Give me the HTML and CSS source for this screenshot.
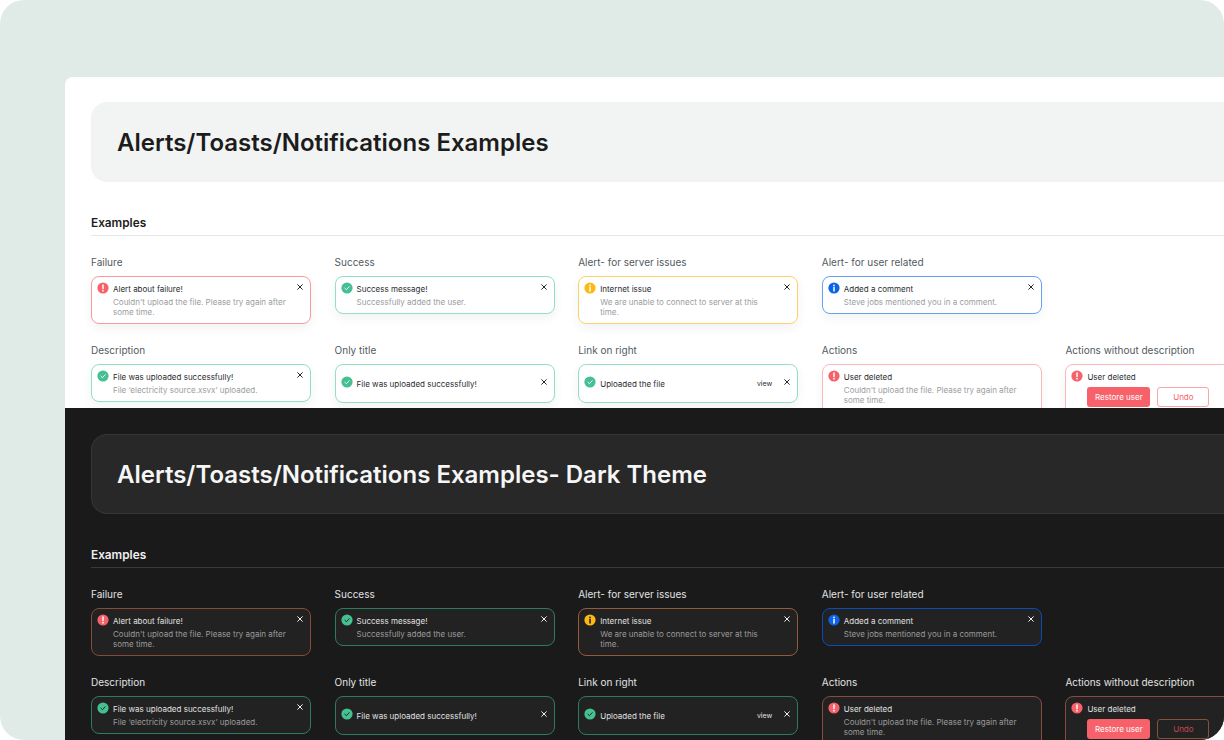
FILE: index.html
```html
<!DOCTYPE html>
<html lang="en">
<head>
<meta charset="utf-8">
<title>Alerts/Toasts/Notifications Examples</title>
<link rel="stylesheet" href="styles.css">
</head>
<body>
<svg class="defs" width="0" height="0" aria-hidden="true">
  <defs>
    <symbol id="i-fail" viewBox="0 0 12 12"><circle cx="6" cy="6" r="5.6" fill="#f7616a"/><path d="M6 2.9v3.6" stroke="#fff" stroke-width="1.5" stroke-linecap="round"/><circle cx="6" cy="8.7" r=".85" fill="#fff"/></symbol>
    <symbol id="i-ok" viewBox="0 0 12 12"><circle cx="6" cy="6" r="5.6" fill="#45c093"/><path d="M3.9 6.2l1.5 1.5 2.8-3" fill="none" stroke="currentColor" stroke-width=".9" stroke-linecap="round" stroke-linejoin="round"/></symbol>
    <symbol id="i-warn" viewBox="0 0 12 12"><circle cx="6" cy="6" r="5.6" fill="#fdb913"/><circle cx="6" cy="3.4" r=".85" fill="currentColor"/><path d="M6 5.4v3.6" stroke="currentColor" stroke-width="1.5" stroke-linecap="round"/></symbol>
    <symbol id="i-info" viewBox="0 0 12 12"><circle cx="6" cy="6" r="5.6" fill="#0a63e8"/><circle cx="6" cy="3.4" r=".85" fill="#fff"/><path d="M6 5.4v3.6" stroke="#fff" stroke-width="1.5" stroke-linecap="round"/></symbol>
    <symbol id="i-x" viewBox="0 0 8 8"><path d="M1.4 1.4l5.2 5.2M6.6 1.4L1.4 6.6" fill="none" stroke="currentColor" stroke-width="1"/></symbol>
  </defs>
</svg>
<main class="stage">
  <section class="panel panel-light">
    <header class="banner"><h1>Alerts/Toasts/Notifications Examples</h1></header>
    <h2 class="section-title">Examples</h2>
    <div class="grid">
      <div class="cell"><p class="label">Failure</p>
        <div class="toast fail"><svg class="icon"><use href="#i-fail"/></svg><div class="body"><p class="title">Alert about failure!</p><p class="desc">Couldn't upload the file. Please try again after some time.</p></div><svg class="close"><use href="#i-x"/></svg></div></div>
      <div class="cell"><p class="label">Success</p>
        <div class="toast ok"><svg class="icon"><use href="#i-ok"/></svg><div class="body"><p class="title">Success message!</p><p class="desc">Successfully added the user.</p></div><svg class="close"><use href="#i-x"/></svg></div></div>
      <div class="cell"><p class="label">Alert- for server issues</p>
        <div class="toast warn"><svg class="icon"><use href="#i-warn"/></svg><div class="body"><p class="title">Internet issue</p><p class="desc">We are unable to connect to server at this time.</p></div><svg class="close"><use href="#i-x"/></svg></div></div>
      <div class="cell"><p class="label">Alert- for user related</p>
        <div class="toast info"><svg class="icon"><use href="#i-info"/></svg><div class="body"><p class="title">Added a comment</p><p class="desc">Steve jobs mentioned you in a comment.</p></div><svg class="close"><use href="#i-x"/></svg></div></div>
      <div class="cell"></div>
      <div class="cell"><p class="label">Description</p>
        <div class="toast ok"><svg class="icon"><use href="#i-ok"/></svg><div class="body"><p class="title">File was uploaded successfully!</p><p class="desc">File ‘electricity source.xsvx’ uploaded.</p></div><svg class="close"><use href="#i-x"/></svg></div></div>
      <div class="cell"><p class="label">Only title</p>
        <div class="toast ok single"><svg class="icon"><use href="#i-ok"/></svg><div class="body"><p class="title">File was uploaded successfully!</p></div><svg class="close"><use href="#i-x"/></svg></div></div>
      <div class="cell"><p class="label">Link on right</p>
        <div class="toast ok single"><svg class="icon"><use href="#i-ok"/></svg><div class="body"><p class="title">Uploaded the file</p></div><span class="link">view</span><svg class="close"><use href="#i-x"/></svg></div></div>
      <div class="cell"><p class="label">Actions</p>
        <div class="toast action"><svg class="icon"><use href="#i-fail"/></svg><div class="body"><p class="title">User deleted</p><p class="desc">Couldn't upload the file. Please try again after some time.</p></div></div></div>
      <div class="cell"><p class="label">Actions without description</p>
        <div class="toast action"><svg class="icon"><use href="#i-fail"/></svg><div class="body"><p class="title">User deleted</p><div class="buttons"><span class="btn solid">Restore user</span><span class="btn ghost">Undo</span></div></div></div></div>
    </div>
  </section>
  <section class="panel panel-dark">
    <header class="banner"><h1>Alerts/Toasts/Notifications Examples- Dark Theme</h1></header>
    <h2 class="section-title">Examples</h2>
    <div class="grid">
      <div class="cell"><p class="label">Failure</p>
        <div class="toast fail"><svg class="icon"><use href="#i-fail"/></svg><div class="body"><p class="title">Alert about failure!</p><p class="desc">Couldn't upload the file. Please try again after some time.</p></div><svg class="close"><use href="#i-x"/></svg></div></div>
      <div class="cell"><p class="label">Success</p>
        <div class="toast ok"><svg class="icon"><use href="#i-ok"/></svg><div class="body"><p class="title">Success message!</p><p class="desc">Successfully added the user.</p></div><svg class="close"><use href="#i-x"/></svg></div></div>
      <div class="cell"><p class="label">Alert- for server issues</p>
        <div class="toast warn"><svg class="icon"><use href="#i-warn"/></svg><div class="body"><p class="title">Internet issue</p><p class="desc">We are unable to connect to server at this time.</p></div><svg class="close"><use href="#i-x"/></svg></div></div>
      <div class="cell"><p class="label">Alert- for user related</p>
        <div class="toast info"><svg class="icon"><use href="#i-info"/></svg><div class="body"><p class="title">Added a comment</p><p class="desc">Steve jobs mentioned you in a comment.</p></div><svg class="close"><use href="#i-x"/></svg></div></div>
      <div class="cell"></div>
      <div class="cell"><p class="label">Description</p>
        <div class="toast ok"><svg class="icon"><use href="#i-ok"/></svg><div class="body"><p class="title">File was uploaded successfully!</p><p class="desc">File ‘electricity source.xsvx’ uploaded.</p></div><svg class="close"><use href="#i-x"/></svg></div></div>
      <div class="cell"><p class="label">Only title</p>
        <div class="toast ok single"><svg class="icon"><use href="#i-ok"/></svg><div class="body"><p class="title">File was uploaded successfully!</p></div><svg class="close"><use href="#i-x"/></svg></div></div>
      <div class="cell"><p class="label">Link on right</p>
        <div class="toast ok single"><svg class="icon"><use href="#i-ok"/></svg><div class="body"><p class="title">Uploaded the file</p></div><span class="link">view</span><svg class="close"><use href="#i-x"/></svg></div></div>
      <div class="cell"><p class="label">Actions</p>
        <div class="toast action"><svg class="icon"><use href="#i-fail"/></svg><div class="body"><p class="title">User deleted</p><p class="desc">Couldn't upload the file. Please try again after some time.</p></div></div></div>
      <div class="cell"><p class="label">Actions without description</p>
        <div class="toast action"><svg class="icon"><use href="#i-fail"/></svg><div class="body"><p class="title">User deleted</p><div class="buttons"><span class="btn solid">Restore user</span><span class="btn ghost">Undo</span></div></div></div></div>
    </div>
  </section>
</main>
</body>
</html>
```
FILE: styles.css
```css
* { box-sizing: border-box; }
html, body { margin: 0; padding: 0; background: #fff; }
body { width: 1224px; height: 740px; overflow: hidden; font-family: Inter, "Liberation Sans", sans-serif; }
p, h1, h2 { margin: 0; }
.defs { display: block; height: 0; }
.stage {
  width: 1224px; height: 740px; padding: 77px 0 0 65px;
  background: #e0ebe7; border-radius: 24px; overflow: hidden;
  display: flex; flex-direction: column;
}
.panel { width: 1159px; overflow: hidden; flex: none; padding: 25px 0 0 26px; }
.panel-light {
  height: 331px; background: #fff; border-top-left-radius: 8px;
  --title: #1c1c1c; --head: #1c1c1c; --label: #525a62; --rule: #e4e7e6;
  --banner: #f2f4f3; --banner-line: #f2f4f3; --card: #fff;
  --t: #2a2d30; --d: #9a9d9f; --x: #26292b;
  --fail: #fb9a9c; --ok: #92dfc3; --warn: #fed266; --info: #63a2f5; --act: #fdb6b9; --shadow: 0 4px 10px rgba(60, 70, 70, .07);
  --tick: #fff; --ghost: #f7616a; --ghost-b: #fba5a9;
}
.panel-dark {
  height: 332px; background: #1a1a1a; padding-top: 26px;
  --title: #f6f6f6; --head: #f0f0f0; --label: #e2e2e2; --rule: #3a3a3a;
  --banner: #282828; --banner-line: #363636; --card: #222;
  --t: #e0e0e0; --d: #9b9b9b; --x: #f0f0f0;
  --fail: #8a4a36; --ok: #2f7b62; --warn: #955a3a; --info: #0a4eb5; --act: #8a4a40; --shadow: none;
  --tick: #1a1a1a; --ghost: #c2484e; --ghost-b: #85503e;
}
.banner {
  width: 1159px; height: 80px; padding: 1px 0 0 25px;
  display: flex; align-items: center;
  background: var(--banner); border: 1px solid var(--banner-line); border-right: 0;
  border-radius: 16px 0 0 16px;
}
h1 { font-size: 24px; font-weight: 600; line-height: 30px; color: var(--title); white-space: nowrap; }
.section-title {
  margin-top: 32px; height: 22px; line-height: 18px;
  font-size: 11.8px; font-weight: 600; color: var(--head);
  border-bottom: 1px solid var(--rule);
}
.grid {
  margin-top: 20px; width: 1240px;
  display: grid; grid-template-columns: repeat(5, 220px); column-gap: 23.6px; row-gap: 0;
  grid-template-rows: 88px auto;
}
.label { font-size: 10px; line-height: 12px; height: 20px; color: var(--label); white-space: nowrap; }
.toast {
  display: flex; align-items: flex-start; gap: 4px;
  padding: 6px 6px 5.5px 5px; border: 1px solid; border-radius: 8px;
  background: var(--card); box-shadow: var(--shadow);
}
.fail { border-color: var(--fail); }
.ok { border-color: var(--ok); }
.warn { border-color: var(--warn); }
.info { border-color: var(--info); }
.action { border-color: var(--act); height: 70px; width: 220px; }
.single { align-items: center; height: 38.5px; padding-top: 0; padding-bottom: 0; }
.icon { width: 12px; height: 12px; flex: none; color: var(--tick); margin-top: -1px; }
.body { flex: 1; min-width: 0; }
.title { font-size: 8px; line-height: 11px; padding-top: 1px; color: var(--t); white-space: nowrap; }
.desc { font-size: 8px; line-height: 10px; margin-top: 2px; color: var(--d); padding-right: 4px; }
.close { width: 8px; height: 8px; flex: none; color: var(--x); }
.single .icon, .single .close { margin-top: -2px; }
.single .title { padding-top: 2px; }
.link { font-size: 7px; color: var(--t); margin-right: 7px; }
.buttons { display: flex; gap: 7px; margin-top: 4px; }
.btn {
  height: 20px; display: flex; align-items: center; justify-content: center;
  font-size: 8px; border-radius: 3px;
}
.btn.solid { width: 63px; background: #f7616a; color: #fff; }
.btn.ghost { width: 52px; border: 1px solid var(--ghost-b); color: var(--ghost); }
```
